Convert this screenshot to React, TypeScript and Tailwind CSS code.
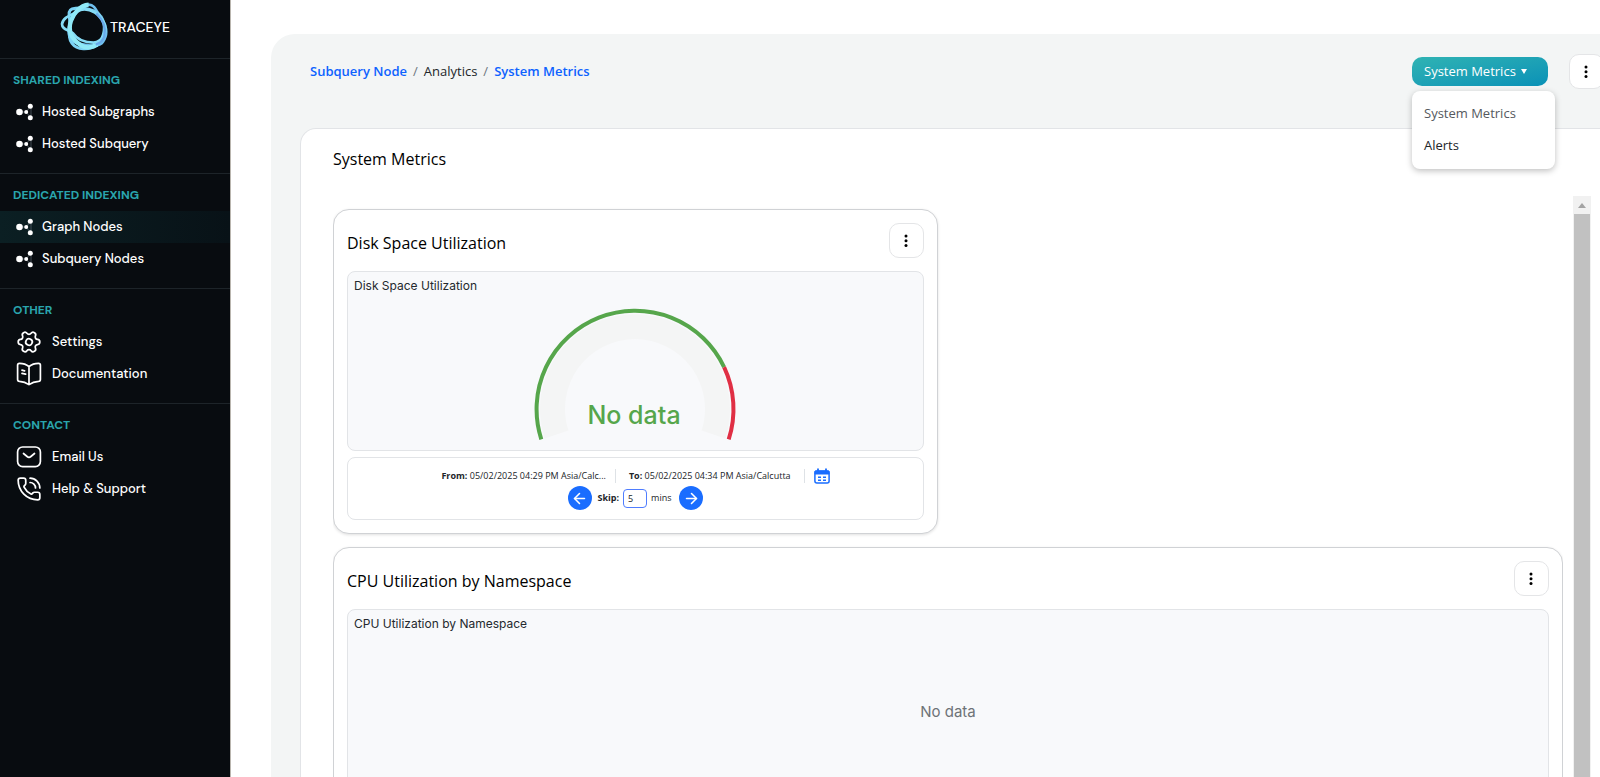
import type { ReactNode } from "react";
import { ArrowLeft, ArrowRight, PhoneCall, Settings } from "lucide-react";

type NavItem = { label: string; icon: ReactNode; active?: boolean };
type NavSection = { title: string; wide?: boolean; items: NavItem[] };

function NodesIcon() {
  return (
    <svg width="18" height="18" viewBox="0 0 18 18" fill="white" aria-hidden>
      <path d="M4 9h7M10 9l5-6v12z" fill="none" stroke="#5b6b73" strokeWidth="0.7" />
      <circle cx="3.5" cy="9" r="3.3" />
      <circle cx="10.2" cy="9" r="2" />
      <circle cx="14.3" cy="3.2" r="2.5" />
      <circle cx="14.3" cy="14.8" r="2.5" />
    </svg>
  );
}

function BookIcon() {
  return (
    <svg width="26" height="26" viewBox="0 0 26 26" fill="none" stroke="white" strokeWidth="1.7" strokeLinecap="round" strokeLinejoin="round" aria-hidden>
      <path d="M13 5.5C10.5 3.4 6.5 2.3 3.5 2.3A1.9 1.9 0 0 0 1.6 4.2V18.5C1.6 19.6 2.4 20.3 3.5 20.4C6.7 20.6 10.3 21.7 13 23.6C15.7 21.7 19.3 20.6 22.5 20.4C23.6 20.3 24.4 19.6 24.4 18.5V4.2A1.9 1.9 0 0 0 22.5 2.3C19.5 2.3 15.5 3.4 13 5.5V23.6" />
      <path d="M6 9.2l2.6.6M6 12.4l3.6.8" />
    </svg>
  );
}

function MailIcon() {
  return (
    <svg width="26" height="26" viewBox="0 0 26 26" fill="none" stroke="white" strokeWidth="1.7" strokeLinecap="round" strokeLinejoin="round" aria-hidden>
      <rect x="1.6" y="3" width="22.8" height="19.6" rx="5" />
      <path d="M7.5 9.5l3.6 3a3 3 0 0 0 3.8 0l3.6-3" />
    </svg>
  );
}

function Logo() {
  return (
    <svg width="50" height="54" viewBox="9 0 150 162" fill="none" aria-hidden>
      <path d="M95 14C115 14 118 35 135 58C152 85 152 105 138 125C125 145 90 135 60 130C35 122 30 95 38 72C50 45 70 14 95 14Z" stroke="#6fbfee" strokeWidth="8" />
      <path d="M45 27C75 18 120 30 132 50C148 75 145 110 120 135C95 152 60 150 45 130C30 110 42 90 38 60C34 40 35 30 45 27Z" stroke="#7cd3f5" strokeWidth="9" />
      <path d="M15 72C18 50 45 45 70 30C100 22 132 45 144 75C150 100 135 125 110 128C80 128 60 118 48 100C35 88 15 90 15 72Z" stroke="#86dcf6" strokeWidth="8" />
      <path d="M95 14C68 16 50 40 42 62C32 92 44 118 72 136C88 146 108 142 120 134" stroke="#8fe9f7" strokeWidth="13" />
      <path d="M118 40C140 62 148 84 142 108C138 124 128 130 116 134" stroke="#69a9ea" strokeWidth="7" />
    </svg>
  );
}

function CalendarIcon() {
  return (
    <svg width="16" height="16" viewBox="0 0 16 16" fill="none" stroke="#1a6dff" aria-hidden>
      <rect x="0.9" y="2.9" width="14.2" height="12.2" rx="2" strokeWidth="1.5" />
      <path d="M1 3h14v3H1z" fill="#1a6dff" strokeWidth="1" />
      <path d="M4 0.5v3M12 0.5v3" strokeWidth="1.8" />
      <path d="M4 9.3h3M9 9.3h3M4 12.2h3M9 12.2h3" strokeWidth="1.5" />
    </svg>
  );
}

const sections: NavSection[] = [
  {
    title: "SHARED INDEXING",
    items: [
      { label: "Hosted Subgraphs", icon: <NodesIcon /> },
      { label: "Hosted Subquery", icon: <NodesIcon /> },
    ],
  },
  {
    title: "DEDICATED INDEXING",
    items: [
      { label: "Graph Nodes", icon: <NodesIcon />, active: true },
      { label: "Subquery Nodes", icon: <NodesIcon /> },
    ],
  },
  {
    title: "OTHER",
    wide: true,
    items: [
      { label: "Settings", icon: <Settings size={26} strokeWidth={1.6} className="rotate-30" /> },
      { label: "Documentation", icon: <BookIcon /> },
    ],
  },
  {
    title: "CONTACT",
    wide: true,
    items: [
      { label: "Email Us", icon: <MailIcon /> },
      { label: "Help & Support", icon: <PhoneCall size={26} strokeWidth={1.6} /> },
    ],
  },
];

function Sidebar() {
  return (
    <aside className="w-[231px] shrink-0 border-r border-[#b9b5ae] bg-[#080c10] font-['DM_Sans',Inter,sans-serif] text-white">
      <a href="#" className="flex h-[58px] items-start justify-center text-sm font-medium">
        <Logo />
        <span className="pt-[17px]">TRACEYE</span>
      </a>
      <nav>
        {sections.map((section) => (
          <section key={section.title} className="border-t border-[#1d2429] py-[13px]">
            <h2 className="mb-2 px-[13px] text-xs font-bold text-[#2aa5ad]">{section.title}</h2>
            <ul>
              {section.items.map((item) => (
                <li key={item.label}>
                  <a
                    href="#"
                    className={`flex h-8 items-center px-4 text-[13px] font-medium ${section.wide ? "gap-[10px]" : "gap-2"} ${
                      item.active ? "bg-linear-to-r from-[#0b1f23] to-[#081217]" : ""
                    }`}
                  >
                    {item.icon}
                    {item.label}
                  </a>
                </li>
              ))}
            </ul>
          </section>
        ))}
      </nav>
    </aside>
  );
}

function KebabButton({ label }: { label: string }) {
  return (
    <button aria-label={label} className="flex size-[35px] shrink-0 items-center justify-center rounded-[10px] border border-[#e4e5e7] bg-white">
      <svg width="5" height="15" viewBox="0 0 5 15" aria-hidden>
        <circle cx="2" cy="3" r="1.5" />
        <circle cx="2" cy="7.7" r="1.5" />
        <circle cx="2" cy="12.4" r="1.5" />
      </svg>
    </button>
  );
}

function Card({ title, children }: { title: string; children: ReactNode }) {
  return (
    <article className="rounded-2xl border border-[#d0d2d5] bg-white p-[13px] shadow-[0_1px_3px_rgba(0,0,0,0.12)]">
      <header className="mb-[13px] flex items-center justify-between">
        <h3 className="pt-1 text-base font-medium">{title}</h3>
        <KebabButton label={`${title} options`} />
      </header>
      {children}
    </article>
  );
}

function Panel({ title, children }: { title: string; children: ReactNode }) {
  return (
    <div className="rounded-lg border border-[#e2e4e7] bg-[#f8f9fb] font-[Inter,sans-serif]">
      <h4 className="px-[6px] pt-[6px] text-xs text-[#24292e]">{title}</h4>
      {children}
    </div>
  );
}

// 216 degree sweep, threshold at 80%
function Gauge() {
  return (
    <svg className="mx-auto block" width="204" height="156" viewBox="-101 -115 204 156" role="img" aria-label="No data">
      <path d="M-90.4 29.4A95 95 0 1 1 90.4 29.4L66.6 21.6A70 70 0 1 0 -66.6 21.6Z" fill="#f4f5f5" />
      <g fill="none" strokeWidth="4">
        <path d="M-93.7 30.4A98.5 98.5 0 0 1 89.1 -41.9" stroke="#56a64b" />
        <path d="M89.1 -41.9A98.5 98.5 0 0 1 93.7 30.4" stroke="#e02f44" />
      </g>
      <text x="-1" y="15" textAnchor="middle" className="fill-[#56a64b] text-[25px] font-medium">
        No data
      </text>
    </svg>
  );
}

function TimeRange() {
  return (
    <div className="mt-[6px] flex flex-col items-center rounded-lg border border-[#e2e4e7] px-2 pt-2 pb-[9px] text-[9px] text-[#212529]">
      <div className="flex h-5 items-center gap-[9px]">
        <span>
          <b>From:</b> 05/02/2025 04:29 PM Asia/Calc...
        </span>
        <span className="h-[14px] border-l border-[#dee2e6]" />
        <span className="px-1">
          <b>To:</b> 05/02/2025 04:34 PM Asia/Calcutta
        </span>
        <span className="h-[14px] border-l border-[#dee2e6]" />
        <button aria-label="Pick a date range">
          <CalendarIcon />
        </button>
      </div>
      <div className="flex h-6 items-center">
        <button aria-label="Skip back" className="flex size-6 items-center justify-center rounded-full bg-[#1a6dff] text-white">
          <ArrowLeft size={17} strokeWidth={2.2} />
        </button>
        <label htmlFor="skip" className="ml-[6px] font-bold">
          Skip:
        </label>
        <input id="skip" defaultValue="5" className="mx-1 h-[19px] w-6 rounded-[4px] border border-[#4f7dff] bg-white px-1" />
        <span className="mr-2">mins</span>
        <button aria-label="Skip forward" className="flex size-6 items-center justify-center rounded-full bg-[#1a6dff] text-white">
          <ArrowRight size={17} strokeWidth={2.2} />
        </button>
      </div>
    </div>
  );
}

function MetricsMenu() {
  return (
    <div className="relative text-[13px]">
      <button className="flex h-[29px] w-[136px] items-center gap-[5px] rounded-[10px] bg-linear-to-br from-[#2fb3b3] to-[#0891b7] px-3 text-white">
        System Metrics
        <svg width="6" height="5" viewBox="0 0 6 5" fill="currentColor" aria-hidden>
          <path d="M0 0h6L3 5z" />
        </svg>
      </button>
      <ul className="absolute top-[34px] left-0 z-10 w-[143px] rounded-lg bg-white py-[7px] text-[#212529] shadow-[0_2px_6px_rgba(0,0,0,0.25)]">
        <li>
          <a href="#" className="flex h-8 items-center px-3 text-[#55595e]">System Metrics</a>
        </li>
        <li>
          <a href="#" className="flex h-8 items-center px-3">Alerts</a>
        </li>
      </ul>
    </div>
  );
}

function Scrollbar() {
  return (
    <div className="flex w-[18px] shrink-0 flex-col bg-[#f1f1f1]" aria-hidden>
      <svg width="18" height="18" viewBox="0 0 18 18" fill="#a3a3a3">
        <path d="M5 12l4-5 4 5z" />
      </svg>
      <div className="mx-px flex-1 bg-[#c1c1c1]" />
    </div>
  );
}

export default function App() {
  return (
    <div className="flex h-screen overflow-hidden bg-white font-['Segoe_UI','Open_Sans',sans-serif] text-black">
      <Sidebar />
      <main className="flex min-w-0 flex-1 flex-col overflow-hidden pt-[34px] pl-10">
        <div className="-mr-8 flex min-h-0 flex-1 flex-col rounded-tl-[24px] bg-[#f3f5f5] pl-[29px]">
          <header className="flex h-[94px] items-start justify-between pt-5 pr-[28px] pl-[10px]">
            <nav aria-label="Breadcrumb" className="flex h-[35px] items-center gap-[6px] text-[13px] text-[#212529]">
              <a href="#" className="font-semibold text-[#0d62ff]">Subquery Node</a>
              <span className="text-[#6c757d]">/</span>
              <span>Analytics</span>
              <span className="text-[#6c757d]">/</span>
              <a href="#" className="font-semibold text-[#0d62ff]">System Metrics</a>
            </nav>
            <div className="flex items-center gap-[21px]">
              <MetricsMenu />
              <KebabButton label="Page options" />
            </div>
          </header>

          <section className="flex min-h-0 flex-1 flex-col rounded-tl-2xl border border-b-0 border-[#e2e4e7] bg-white pl-8">
            <h1 className="pt-[18px] text-base font-medium">System Metrics</h1>
            <div className="mt-[25px] flex min-h-0 flex-1 gap-[10px] pr-[40px]">
              <div className="grid flex-1 grid-cols-2 content-start gap-x-5 gap-y-[13px] overflow-hidden pt-[13px]">
                <Card title="Disk Space Utilization">
                  <Panel title="Disk Space Utilization">
                    <Gauge />
                  </Panel>
                  <TimeRange />
                </Card>
                <div className="col-span-2">
                  <Card title="CPU Utilization by Namespace">
                    <Panel title="CPU Utilization by Namespace">
                      <p className="flex h-[160px] items-center justify-center text-[15px] text-[#6e7377]">No data</p>
                    </Panel>
                  </Card>
                </div>
              </div>
              <Scrollbar />
            </div>
          </section>
        </div>
      </main>
    </div>
  );
}
